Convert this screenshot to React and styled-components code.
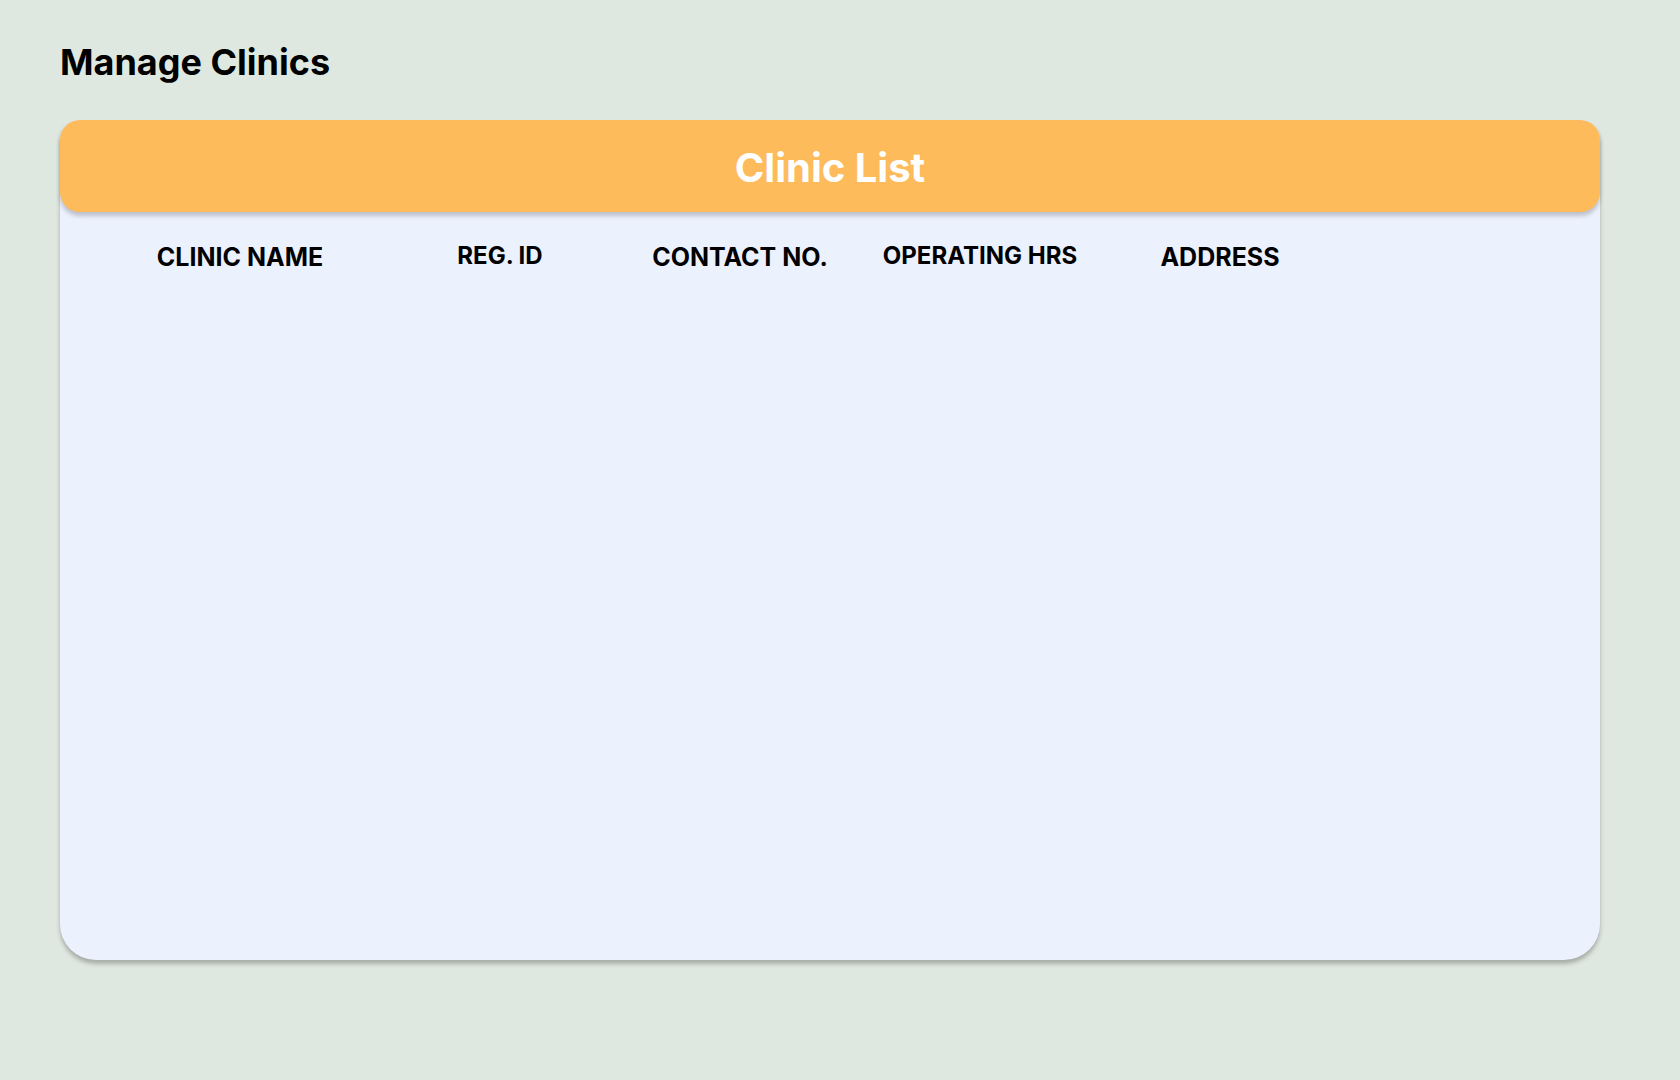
import React from "react";
import styled, { createGlobalStyle } from "styled-components";

const GlobalStyle = createGlobalStyle`
  html, body {
    margin: 0;
    padding: 0;
    background: #dfe8e0;
    font-family: Inter, "Noto Sans", "Liberation Sans", sans-serif;
  }
`;

const Page = styled.main`
  min-height: 1080px;
  box-sizing: border-box;
  padding: 41px 80px 0 60px;
`;

const Title = styled.h1`
  margin: 0 0 35px;
  font-size: 36px;
  font-weight: 700;
  line-height: 1.21;
  color: #000;
`;

const Card = styled.section`
  height: 840px;
  background: #ecf1fe;
  border-radius: 20px 20px 36px 36px;
  box-shadow: 0 4px 4px rgba(0, 0, 0, 0.25);
  display: flex;
  flex-direction: column;
`;

const CardHeader = styled.header`
  height: 92px;
  display: flex;
  align-items: center;
  justify-content: center;
  background: #febb5c;
  border-radius: 20px;
  box-shadow: 0 4px 4px rgba(0, 0, 0, 0.2);
`;

const CardTitle = styled.h2`
  margin: 0;
  padding-top: 3px;
  font-size: 40px;
  font-weight: 700;
  color: #fff;
`;

const HeadRow = styled.div`
  display: grid;
  grid-template-columns: 280px 240px 240px 240px 240px;
  align-items: end;
  margin-top: 29px;
  padding-left: 40px;
`;

const HeadCell = styled.div`
  text-align: center;
  font-size: ${p => (p.small ? "24px" : "25px")};
  font-weight: 700;
  line-height: 30px;
  color: #000;
  margin-bottom: ${p => (p.small ? "1px" : "0")};
`;

const columns = [
  { label: "CLINIC NAME" },
  { label: "REG. ID", small: true },
  { label: "CONTACT NO." },
  { label: "OPERATING HRS", small: true },
  { label: "ADDRESS" },
];

export default function App() {
  return (
    <>
      <GlobalStyle />
      <Page>
        <Title>Manage Clinics</Title>
        <Card>
          <CardHeader>
            <CardTitle>Clinic List</CardTitle>
          </CardHeader>
          <HeadRow>
            {columns.map(col => (
              <HeadCell key={col.label} small={col.small}>
                {col.label}
              </HeadCell>
            ))}
          </HeadRow>
        </Card>
      </Page>
    </>
  );
}
